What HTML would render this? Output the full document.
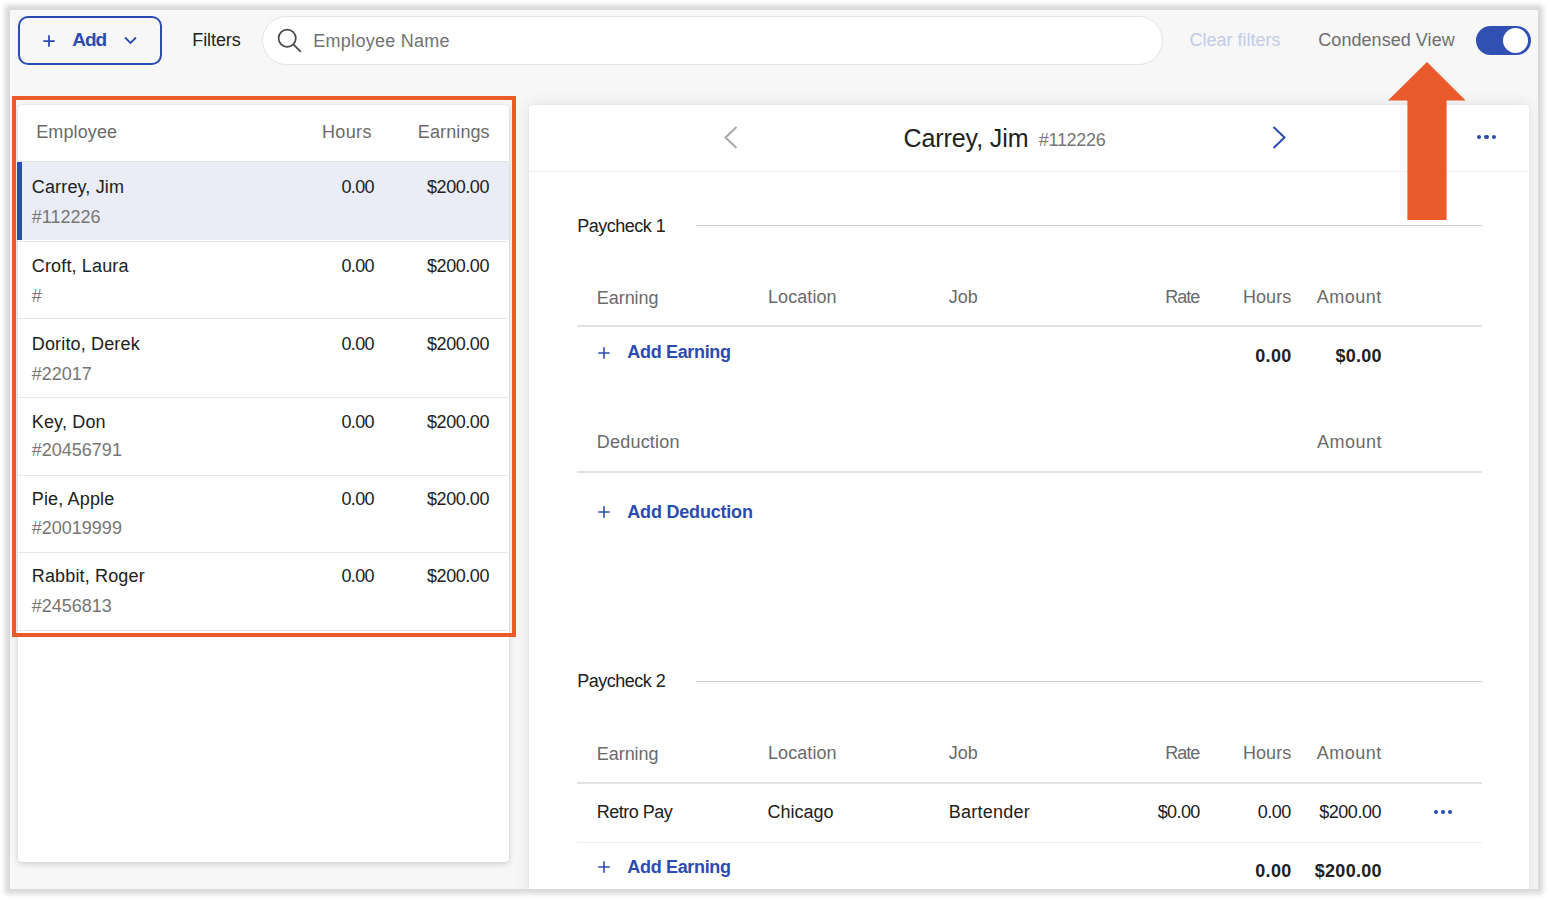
<!DOCTYPE html>
<html><head><meta charset="utf-8"><title>Payroll</title>
<style>
html,body{margin:0;padding:0;background:#fff;width:1550px;height:900px;overflow:hidden;}
body{position:relative;font-family:"Liberation Sans",sans-serif;}
.a{position:absolute;}
.t{position:absolute;white-space:nowrap;}
#frame{position:absolute;left:10px;top:10px;width:1528px;height:879px;background:#f7f7f7;box-shadow:0 0 5px 5px rgba(0,0,0,0.155);}
#clip{position:absolute;left:10px;top:10px;width:1528px;height:879px;overflow:hidden;}
#inner{position:absolute;left:-10px;top:-10px;width:1550px;height:900px;}
</style></head><body>
<div id="frame"></div>
<div id="clip"><div id="inner">
<div class="a" style="left:17.5px;top:16px;width:144.5px;height:48.5px;box-sizing:border-box;border:2px solid #2c4bb0;border-radius:10px;"></div>
<svg class="a" style="left:41.6px;top:34px" width="14" height="14" viewBox="0 0 14 14"><path d="M7 1.3V12.7M1.3 7H12.7" stroke="#2c4bb0" stroke-width="1.75"/></svg>
<div class="t" style="top:28.12px;font-size:19px;line-height:24px;color:#2c4bb0;font-weight:700;letter-spacing:-1.0px;left:72.30px;">Add</div>
<svg class="a" style="left:124px;top:36px" width="13" height="9" viewBox="0 0 13 9"><path d="M1 1.5L6.5 7L12 1.5" fill="none" stroke="#2c4bb0" stroke-width="1.8"/></svg>
<div class="t" style="top:29.36px;font-size:18px;line-height:22px;color:#212121;letter-spacing:-0.1px;left:192.30px;">Filters</div>
<div class="a" style="left:261.5px;top:16px;width:901.3px;height:48.5px;box-sizing:border-box;background:#fff;border:1px solid #e4e4e4;border-radius:25px;"></div>
<svg class="a" style="left:276px;top:27px" width="27" height="27" viewBox="0 0 27 27"><circle cx="11.2" cy="11.2" r="8.6" fill="none" stroke="#4a4a4a" stroke-width="1.7"/><path d="M17.4 17.4L24.8 24.8" stroke="#4a4a4a" stroke-width="1.8"/></svg>
<div class="t" style="top:30.06px;font-size:18px;line-height:22px;color:#727272;letter-spacing:0.27px;left:313.30px;">Employee Name</div>
<div class="t" style="top:29.36px;font-size:18px;line-height:22px;color:#c3cbe6;left:1189.50px;">Clear filters</div>
<div class="t" style="top:29.36px;font-size:18px;line-height:22px;color:#6e6e6e;letter-spacing:0.05px;left:1318.30px;">Condensed View</div>
<div class="a" style="left:1476px;top:25.5px;width:54.5px;height:29.5px;background:#3050b3;border-radius:15px;"></div>
<div class="a" style="left:1503.3px;top:27.7px;width:25px;height:25px;background:#fff;border-radius:50%;"></div>
<div class="a" style="left:18px;top:104.5px;width:490.6px;height:757.8px;background:#fff;border-radius:4px;box-shadow:0 2px 6px rgba(0,0,0,0.16), 0 0 2px rgba(0,0,0,0.08);"></div>
<div class="t" style="top:121.16px;font-size:18px;line-height:22px;color:#6a6a6a;letter-spacing:0.12px;left:36.20px;">Employee</div>
<div class="t" style="top:121.16px;font-size:18px;line-height:22px;color:#6a6a6a;letter-spacing:0.4px;right:1178.10px;text-align:right;">Hours</div>
<div class="t" style="top:121.16px;font-size:18px;line-height:22px;color:#6a6a6a;letter-spacing:0.1px;right:1060.30px;text-align:right;">Earnings</div>
<div class="a" style="left:18px;top:161px;width:490px;height:1px;background:#e3e3e3;"></div>
<div class="a" style="left:18px;top:162.3px;width:490.6px;height:78.0px;background:#eaedf6;"></div>
<div class="a" style="left:17.3px;top:162.3px;width:4.7px;height:78.0px;background:#2c4bb0;"></div>
<div class="t" style="top:176.26px;font-size:18px;line-height:22px;color:#212121;letter-spacing:0.15px;left:31.80px;">Carrey, Jim</div>
<div class="t" style="top:205.66px;font-size:18px;line-height:22px;color:#767676;left:31.80px;">#112226</div>
<div class="t" style="top:176.26px;font-size:18px;line-height:22px;color:#212121;letter-spacing:-0.65px;right:1176.15px;text-align:right;">0.00</div>
<div class="t" style="top:176.26px;font-size:18px;line-height:22px;color:#212121;letter-spacing:-0.45px;right:1061.05px;text-align:right;">$200.00</div>
<div class="t" style="top:254.96px;font-size:18px;line-height:22px;color:#212121;letter-spacing:0.15px;left:31.80px;">Croft, Laura</div>
<div class="t" style="top:284.96px;font-size:18px;line-height:22px;color:#767676;left:31.80px;">#</div>
<div class="t" style="top:254.96px;font-size:18px;line-height:22px;color:#212121;letter-spacing:-0.65px;right:1176.15px;text-align:right;">0.00</div>
<div class="t" style="top:254.96px;font-size:18px;line-height:22px;color:#212121;letter-spacing:-0.45px;right:1061.05px;text-align:right;">$200.00</div>
<div class="a" style="left:18px;top:240.6px;width:490px;height:1px;background:#e6e6e6;"></div>
<div class="t" style="top:333.26px;font-size:18px;line-height:22px;color:#212121;letter-spacing:0.15px;left:31.80px;">Dorito, Derek</div>
<div class="t" style="top:362.56px;font-size:18px;line-height:22px;color:#767676;left:31.80px;">#22017</div>
<div class="t" style="top:333.26px;font-size:18px;line-height:22px;color:#212121;letter-spacing:-0.65px;right:1176.15px;text-align:right;">0.00</div>
<div class="t" style="top:333.26px;font-size:18px;line-height:22px;color:#212121;letter-spacing:-0.45px;right:1061.05px;text-align:right;">$200.00</div>
<div class="a" style="left:18px;top:318.2px;width:490px;height:1px;background:#e6e6e6;"></div>
<div class="t" style="top:410.56px;font-size:18px;line-height:22px;color:#212121;letter-spacing:0.15px;left:31.80px;">Key, Don</div>
<div class="t" style="top:439.16px;font-size:18px;line-height:22px;color:#767676;left:31.80px;">#20456791</div>
<div class="t" style="top:410.56px;font-size:18px;line-height:22px;color:#212121;letter-spacing:-0.65px;right:1176.15px;text-align:right;">0.00</div>
<div class="t" style="top:410.56px;font-size:18px;line-height:22px;color:#212121;letter-spacing:-0.45px;right:1061.05px;text-align:right;">$200.00</div>
<div class="a" style="left:18px;top:397.4px;width:490px;height:1px;background:#e6e6e6;"></div>
<div class="t" style="top:488.36px;font-size:18px;line-height:22px;color:#212121;letter-spacing:0.15px;left:31.80px;">Pie, Apple</div>
<div class="t" style="top:517.16px;font-size:18px;line-height:22px;color:#767676;left:31.80px;">#20019999</div>
<div class="t" style="top:488.36px;font-size:18px;line-height:22px;color:#212121;letter-spacing:-0.65px;right:1176.15px;text-align:right;">0.00</div>
<div class="t" style="top:488.36px;font-size:18px;line-height:22px;color:#212121;letter-spacing:-0.45px;right:1061.05px;text-align:right;">$200.00</div>
<div class="a" style="left:18px;top:474.6px;width:490px;height:1px;background:#e6e6e6;"></div>
<div class="t" style="top:564.96px;font-size:18px;line-height:22px;color:#212121;letter-spacing:0.15px;left:31.80px;">Rabbit, Roger</div>
<div class="t" style="top:594.76px;font-size:18px;line-height:22px;color:#767676;left:31.80px;">#2456813</div>
<div class="t" style="top:564.96px;font-size:18px;line-height:22px;color:#212121;letter-spacing:-0.65px;right:1176.15px;text-align:right;">0.00</div>
<div class="t" style="top:564.96px;font-size:18px;line-height:22px;color:#212121;letter-spacing:-0.45px;right:1061.05px;text-align:right;">$200.00</div>
<div class="a" style="left:18px;top:552.1px;width:490px;height:1px;background:#e6e6e6;"></div>
<div class="a" style="left:18px;top:629.9px;width:490px;height:1px;background:#e6e6e6;"></div>
<div class="a" style="left:528.5px;top:104.5px;width:1000.5px;height:800px;background:#fff;border-radius:4px;box-shadow:0 0 16px rgba(0,0,0,0.1), 0 0 2px rgba(0,0,0,0.06);"></div>
<div class="a" style="left:528.5px;top:171px;width:1000.5px;height:1px;background:#f0f0f0;"></div>
<svg class="a" style="left:722px;top:125px" width="17" height="25" viewBox="0 0 17 25"><path d="M14.5 2L3.5 12.5L14.5 23" fill="none" stroke="#a9a9a9" stroke-width="2"/></svg>
<svg class="a" style="left:1271px;top:125px" width="17" height="25" viewBox="0 0 17 25"><path d="M2.5 2L13.5 12.5L2.5 23" fill="none" stroke="#2c4bb0" stroke-width="2"/></svg>
<div class="t" style="top:122.74px;font-size:25px;line-height:31px;color:#212121;letter-spacing:-0.1px;left:903.60px;">Carrey, Jim</div>
<div class="t" style="top:129.16px;font-size:18px;line-height:22px;color:#767676;letter-spacing:-0.3px;left:1038.80px;">#112226</div>
<div class="a" style="left:1476.8px;top:135px;width:4.4px;height:4.4px;background:#2c4bb0;border-radius:50%;"></div>
<div class="a" style="left:1484.3px;top:135px;width:4.4px;height:4.4px;background:#2c4bb0;border-radius:50%;"></div>
<div class="a" style="left:1491.8px;top:135px;width:4.4px;height:4.4px;background:#2c4bb0;border-radius:50%;"></div>
<div class="t" style="top:214.76px;font-size:18px;line-height:22px;color:#212121;letter-spacing:-0.5px;left:577.20px;">Paycheck 1</div>
<div class="a" style="left:696px;top:225px;width:786px;height:1px;background:#cdcdcd;"></div>
<div class="t" style="top:286.86px;font-size:18px;line-height:22px;color:#6a6a6a;letter-spacing:-0.05px;left:596.80px;">Earning</div>
<div class="t" style="top:286.36px;font-size:18px;line-height:22px;color:#6a6a6a;letter-spacing:0.08px;left:768.00px;">Location</div>
<div class="t" style="top:286.36px;font-size:18px;line-height:22px;color:#6a6a6a;left:948.70px;">Job</div>
<div class="t" style="top:286.36px;font-size:18px;line-height:22px;color:#6a6a6a;letter-spacing:-1.0px;right:350.70px;text-align:right;">Rate</div>
<div class="t" style="top:286.36px;font-size:18px;line-height:22px;color:#6a6a6a;letter-spacing:0.1px;right:258.60px;text-align:right;">Hours</div>
<div class="t" style="top:286.36px;font-size:18px;line-height:22px;color:#6a6a6a;letter-spacing:0.5px;right:168.30px;text-align:right;">Amount</div>
<div class="a" style="left:577px;top:325px;width:905px;height:2px;background:#e2e2e2;"></div>
<svg class="a" style="left:596.5px;top:345.7px" width="14" height="14" viewBox="0 0 14 14"><path d="M7 1.3V12.7M1.3 7H12.7" stroke="#2c4bb0" stroke-width="1.6"/></svg>
<div class="t" style="top:340.76px;font-size:18px;line-height:22px;color:#2c4bb0;font-weight:700;letter-spacing:-0.33px;left:627.30px;">Add Earning</div>
<div class="t" style="top:344.76px;font-size:18px;line-height:22px;color:#212121;font-weight:700;letter-spacing:0.35px;right:258.35px;text-align:right;">0.00</div>
<div class="t" style="top:344.76px;font-size:18px;line-height:22px;color:#212121;font-weight:700;letter-spacing:0.27px;right:168.23px;text-align:right;">$0.00</div>
<div class="t" style="top:430.96px;font-size:18px;line-height:22px;color:#6a6a6a;letter-spacing:0.2px;left:596.80px;">Deduction</div>
<div class="t" style="top:430.96px;font-size:18px;line-height:22px;color:#6a6a6a;letter-spacing:0.5px;right:168.00px;text-align:right;">Amount</div>
<div class="a" style="left:577px;top:470.5px;width:905px;height:2px;background:#e2e2e2;"></div>
<svg class="a" style="left:596.5px;top:505px" width="14" height="14" viewBox="0 0 14 14"><path d="M7 1.3V12.7M1.3 7H12.7" stroke="#2c4bb0" stroke-width="1.6"/></svg>
<div class="t" style="top:500.96px;font-size:18px;line-height:22px;color:#2c4bb0;font-weight:700;letter-spacing:-0.2px;left:627.30px;">Add Deduction</div>
<div class="t" style="top:670.36px;font-size:18px;line-height:22px;color:#212121;letter-spacing:-0.5px;left:577.20px;">Paycheck 2</div>
<div class="a" style="left:696px;top:681px;width:786px;height:1px;background:#cdcdcd;"></div>
<div class="t" style="top:742.96px;font-size:18px;line-height:22px;color:#6a6a6a;letter-spacing:-0.05px;left:596.80px;">Earning</div>
<div class="t" style="top:742.46px;font-size:18px;line-height:22px;color:#6a6a6a;letter-spacing:0.08px;left:768.00px;">Location</div>
<div class="t" style="top:742.46px;font-size:18px;line-height:22px;color:#6a6a6a;left:948.70px;">Job</div>
<div class="t" style="top:742.46px;font-size:18px;line-height:22px;color:#6a6a6a;letter-spacing:-1.0px;right:350.70px;text-align:right;">Rate</div>
<div class="t" style="top:742.46px;font-size:18px;line-height:22px;color:#6a6a6a;letter-spacing:0.1px;right:258.60px;text-align:right;">Hours</div>
<div class="t" style="top:742.46px;font-size:18px;line-height:22px;color:#6a6a6a;letter-spacing:0.5px;right:168.30px;text-align:right;">Amount</div>
<div class="a" style="left:577px;top:782px;width:905px;height:2px;background:#e2e2e2;"></div>
<div class="t" style="top:800.76px;font-size:18px;line-height:22px;color:#212121;letter-spacing:-0.5px;left:596.80px;">Retro Pay</div>
<div class="t" style="top:800.76px;font-size:18px;line-height:22px;color:#212121;left:767.60px;">Chicago</div>
<div class="t" style="top:800.76px;font-size:18px;line-height:22px;color:#212121;letter-spacing:0.25px;left:948.70px;">Bartender</div>
<div class="t" style="top:800.76px;font-size:18px;line-height:22px;color:#212121;letter-spacing:-0.6px;right:350.30px;text-align:right;">$0.00</div>
<div class="t" style="top:800.76px;font-size:18px;line-height:22px;color:#212121;letter-spacing:-0.45px;right:259.15px;text-align:right;">0.00</div>
<div class="t" style="top:800.76px;font-size:18px;line-height:22px;color:#212121;letter-spacing:-0.45px;right:168.95px;text-align:right;">$200.00</div>
<div class="a" style="left:1433.8999999999999px;top:809.8px;width:3.8px;height:3.8px;background:#2c4bb0;border-radius:50%;"></div>
<div class="a" style="left:1441.1px;top:809.8px;width:3.8px;height:3.8px;background:#2c4bb0;border-radius:50%;"></div>
<div class="a" style="left:1448.3px;top:809.8px;width:3.8px;height:3.8px;background:#2c4bb0;border-radius:50%;"></div>
<div class="a" style="left:577px;top:842px;width:905px;height:1px;background:#eeeeee;"></div>
<svg class="a" style="left:596.5px;top:859.8px" width="14" height="14" viewBox="0 0 14 14"><path d="M7 1.3V12.7M1.3 7H12.7" stroke="#2c4bb0" stroke-width="1.6"/></svg>
<div class="t" style="top:855.66px;font-size:18px;line-height:22px;color:#2c4bb0;font-weight:700;letter-spacing:-0.33px;left:627.30px;">Add Earning</div>
<div class="t" style="top:860.26px;font-size:18px;line-height:22px;color:#212121;font-weight:700;letter-spacing:0.35px;right:258.35px;text-align:right;">0.00</div>
<div class="t" style="top:860.26px;font-size:18px;line-height:22px;color:#212121;font-weight:700;letter-spacing:0.27px;right:168.23px;text-align:right;">$200.00</div>
<div class="a" style="left:12px;top:96px;width:504px;height:541px;box-sizing:border-box;border:4px solid #ea5a2a;"></div>
<svg class="a" style="left:1388px;top:62px" width="78" height="158" viewBox="0 0 78 158"><path d="M39 0L77.6 38.6H58.6V158H19.4V38.6H0Z" fill="#ea5a2a"/></svg>
</div></div>
</body></html>
